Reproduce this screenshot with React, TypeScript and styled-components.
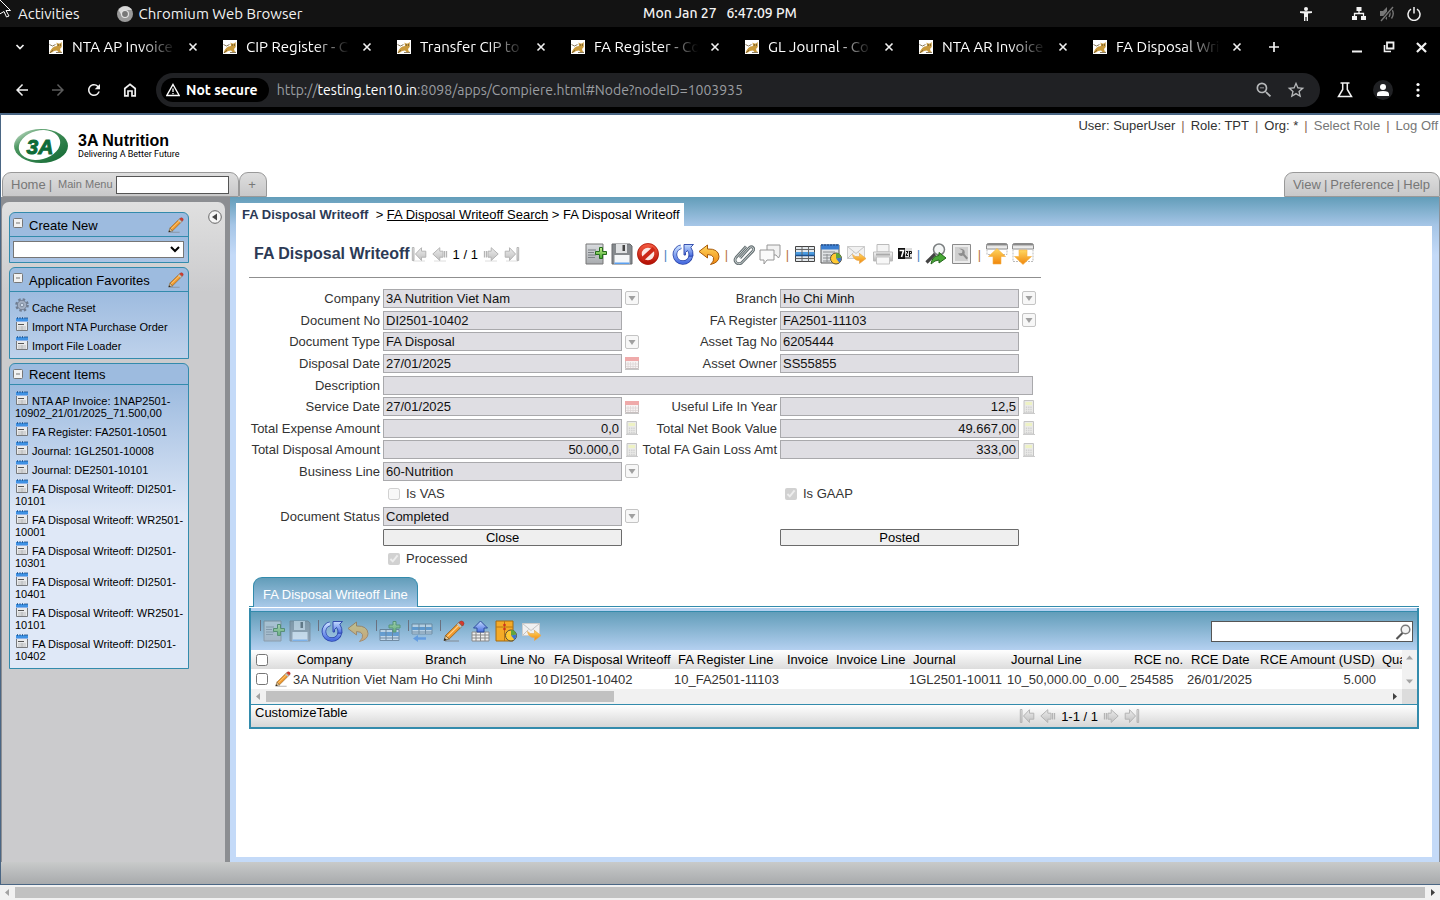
import React from 'react';
import styled, { createGlobalStyle, css } from 'styled-components';
import { MdArrowBack, MdArrowForward, MdRefresh, MdStarBorder, MdZoomOut } from 'react-icons/md';

const ui = '"Liberation Sans", Arial, sans-serif';
const desk = '"Ubuntu", "Noto Sans", sans-serif';
const teal = '#338bac';

const Global = createGlobalStyle`
  *, *::before, *::after { box-sizing: border-box; }
  body { margin: 0; font-family: ${ui}; font-size: 13px; line-height: 15px; color: #000; background: #fff; }
  button, input, select { font-family: inherit; font-size: inherit; margin: 0; }
  svg { display: block; flex: none; }
`;

/* ---------- Desktop and browser frame ---------- */

const Screen = styled.div`
  min-height: 100vh;
  display: flex;
  flex-direction: column;
`;
const TopBar = styled.div`
  height: 27px;
  background: #131313;
  color: #f2f2f2;
  font: 500 14px/27px ${desk};
  display: grid;
  grid-template-columns: 1fr auto 1fr;
  position: relative;
`;
const Pointer = styled.svg`
  position: absolute;
  left: 0;
  top: 0;
`;
const TopLeft = styled.div`
  display: flex;
  align-items: center;
  padding-left: 18px;
  gap: 37px;
  font-size: 15px;
  font-weight: 400;
`;
const AppName = styled.span`
  display: flex;
  align-items: center;
  gap: 6px;
`;
const Clock = styled.div`
  white-space: pre;
`;
const TopRight = styled.div`
  display: flex;
  align-items: center;
  justify-content: flex-end;
  gap: 12px;
  padding-right: 19px;
`;
const A11ySlot = styled.span`
  margin-right: 26px;
`;
const TabStrip = styled.div`
  height: 40px;
  background: #000;
  display: flex;
  align-items: center;
  padding: 0 12px;
`;
const PlainButton = styled.button`
  border: 0;
  padding: 0;
  background: none;
  color: inherit;
  display: flex;
  align-items: center;
  justify-content: center;
  flex: none;
`;
const TabMenu = styled(PlainButton)`
  width: 16px;
  height: 16px;
  margin-right: 21px;
`;
const BrowserTab = styled.div`
  width: 174px;
  min-width: 0;
  display: flex;
  align-items: center;
  color: #fff;
  font: 15px/20px ${desk};
`;
const TabTitle = styled.span`
  width: 104px;
  margin: 0 12px 0 9px;
  overflow: hidden;
  white-space: nowrap;
  mask-image: linear-gradient(90deg, #000 65%, transparent);
`;
const NewTab = styled(PlainButton)`
  width: 14px;
`;
const WindowButtons = styled.div`
  margin-left: auto;
  display: flex;
  align-items: center;
  gap: 20px;
`;
const NavBar = styled.div`
  height: 46px;
  background: #000;
  color: #f1f1f1;
  display: flex;
  align-items: center;
  padding: 0 16px 0 13px;
`;
const NavButtons = styled.div`
  display: flex;
  gap: 18px;
  margin-right: 17px;
`;
const NavButton = styled(PlainButton)<{ $off?: boolean }>`
  width: 18px;
  height: 18px;
  color: ${(p) => (p.$off ? '#5c5c5c' : '#f1f1f1')};
`;
const Address = styled.div`
  flex: 1;
  height: 34px;
  border-radius: 17px;
  background: #202124;
  display: flex;
  align-items: center;
  padding: 0 14px 0 5px;
  color: #9a9da1;
  font: 14px/20px ${desk};
`;
const Security = styled.span`
  height: 24px;
  border-radius: 12px;
  background: #000;
  color: #fff;
  font-weight: 700;
  display: flex;
  align-items: center;
  gap: 6px;
  padding: 0 11px 0 5px;
  margin-right: 8px;
`;
const Url = styled.span`
  flex: 1;
  & b { font-weight: 400; color: #fff; }
`;
const AddressIcons = styled.span`
  display: flex;
  gap: 12px;
  color: #b6b8ba;
`;
const NavRight = styled.div`
  display: flex;
  align-items: center;
  gap: 19px;
  margin-left: 16px;
`;
const Avatar = styled(PlainButton)`
  width: 20px;
  height: 20px;
  border-radius: 50%;
  background: #202124;
`;

/* ---------- Page frame ---------- */

const Page = styled.div`
  flex: 1;
  display: flex;
  flex-direction: column;
  border: solid #4a6684;
  border-width: 2px 0 1px 1px;
`;
const Header = styled.header`
  height: 82px;
  display: flex;
  justify-content: space-between;
  background: #fff;
`;
const HeaderSide = styled.div<{ $right?: boolean }>`
  display: flex;
  flex-direction: column;
  justify-content: space-between;
  align-items: ${(p) => (p.$right ? 'flex-end' : 'flex-start')};
`;
const Brand = styled.div`
  display: flex;
  align-items: center;
  gap: 9px;
  padding: 13px 0 0 12px;
`;
const BrandName = styled.div`
  font: bold 16px/17px ${ui};
`;
const Tagline = styled.div`
  font: 9px/11px Roboto, ${ui};
`;
const Session = styled.div`
  display: flex;
  gap: 6px;
  padding: 3px 2px 0 0;
  color: #333;
`;
const QuietLink = styled.a`
  color: #777;
  text-decoration: none;
`;
const Divider = styled.span`
  color: #8a6a52;
`;
const HeaderTabs = styled.nav`
  display: flex;
  padding-left: 1px;
`;
const HeaderTab = styled.div`
  height: 25px;
  display: flex;
  align-items: center;
  gap: 3px;
  padding: 0 9px 0 8px;
  color: #777;
  background: linear-gradient(#dedede, #c8c8c9);
  border: 1px solid #999;
  border-radius: 9px 9px 0 0;
`;
const PlusTab = styled(HeaderTab).attrs({ as: 'button' })`
  width: 28px;
  justify-content: center;
`;
const MenuLabel = styled.label`
  font-size: 11px;
  margin-left: 3px;
`;
const MenuInput = styled.input`
  width: 113px;
  height: 18px;
  border: 1px solid #555;
  background: #fff;
`;
const Body = styled.div`
  flex: 1;
  display: flex;
`;
const SideFrame = styled.aside`
  width: 229px;
  flex: none;
  display: flex;
  background: #8c8e92;
  padding: 5px 5px 0 1px;
`;
const Side = styled.div`
  flex: 1;
  border-radius: 7px 7px 0 0;
  background: linear-gradient(#e0e0e0, #cbcbcd 90px);
  display: flex;
  align-items: flex-start;
  justify-content: space-between;
  padding: 10px 3px 0 7px;
`;
const Boxes = styled.div`
  width: 180px;
  display: flex;
  flex-direction: column;
  gap: 4px;
`;
const Collapse = styled(PlainButton)`
  width: 14px;
  height: 14px;
  margin-top: -2px;
`;
const Box = styled.section`
  border: 1px solid ${teal};
  border-radius: 6px 6px 0 0;
  background: #9dbbdf;
`;
const BoxHead = styled.h2<{ $short?: boolean }>`
  margin: 0;
  height: ${(p) => (p.$short ? 21 : 24)}px;
  padding: 0 4px 0 3px;
  border-bottom: 1px solid ${teal};
  display: flex;
  align-items: center;
  font: 13px/15px ${ui};
  gap: 6px;
  & span { flex: 1; padding-top: ${(p) => (p.$short ? 0 : 2)}px; }
`;
const Toggle = styled(PlainButton)<{ $short?: boolean }>`
  width: 10px;
  height: 10px;
  margin-bottom: ${(p) => (p.$short ? 0 : 4)}px;
`;
const BoxBody = styled.div`
  background: linear-gradient(#9dbbdf, #dfe8f7 130px);
  padding: 3px 1px 6px 5px;
`;
const SelectBody = styled.div`
  padding: 4px 4px 4px 3px;
  background: linear-gradient(#9dbbdf, #abc4e4);
`;
const CreateSelect = styled.select`
  display: block;
  width: 100%;
  height: 17px;
  border: 1px solid #767676;
  background: #fff;
`;
const Items = styled.ul`
  list-style: none;
  margin: 0;
  padding: 0;
  font-size: 11px;
  line-height: 12px;
`;
const Item = styled.li`
  min-height: 19px;
  & svg { display: inline-block; vertical-align: baseline; margin-top: 3px; }
  & a { color: #000; text-decoration: none; }
`;
const Content = styled.main`
  flex: 1;
  min-width: 0;
  display: flex;
  flex-direction: column;
  align-items: stretch;
  padding: 6px 7px 5px 6px;
  background: linear-gradient(#629db9, #a5c5e6 28px, #c4daf8 58px);
  border-right: 1px solid #8c9097;
`;
const Crumbs = styled.nav`
  align-self: flex-start;
  height: 23px;
  padding: 4px 4px 0 6px;
  background: #fff;
  white-space: pre;
  & strong { color: #2c3a55; }
  & a { color: #000; }
`;
const Sheet = styled.div`
  flex: 1;
  background: #fff;
  padding: 16px 13px;
`;
const PageFoot = styled.footer`
  height: 22px;
  background: linear-gradient(#c8caca, #a8aaac);
`;
const ScrollTrack = styled.div`
  height: 15px;
  display: flex;
  align-items: center;
  background: #f1f1f1;
`;
const ScrollArrow = styled.span`
  width: 15px;
  height: 15px;
  flex: none;
  display: flex;
  align-items: center;
  justify-content: center;
`;
const ScrollRun = styled.span`
  flex: 1;
  height: 11px;
`;
const Thumb = styled.span<{ $part: number }>`
  display: block;
  width: ${(p) => p.$part}%;
  height: 11px;
  background: #c1c1c1;
`;

/* ---------- Record form ---------- */

const RecordBar = styled.div`
  max-width: 792px;
  height: 36px;
  margin-bottom: 9px;
  padding: 0 7px 11px 5px;
  border-bottom: 1px solid #8f8f8f;
  display: flex;
  align-items: center;
  justify-content: space-between;
`;
const RecordTitle = styled.h1`
  margin: 0;
  font: bold 16px/18px ${ui};
  color: #2c3a55;
`;
const TitleGroup = styled.div`
  display: flex;
  align-items: center;
  gap: 1px;
`;
const Pager = styled.div`
  display: flex;
  align-items: center;
  gap: 5px;
`;
const Tools = styled.div`
  display: flex;
  align-items: center;
  gap: 4px;
`;
const Sep = styled.span<{ $blue?: boolean }>`
  width: 5px;
  text-align: center;
  color: ${(p) => (p.$blue ? '#4a83c0' : '#b9743c')};
`;
const ToolButton = styled(PlainButton)<{ $faded?: boolean }>`
  opacity: ${(p) => (p.$faded ? 0.5 : 1)};
`;
const Form = styled.form`
  display: grid;
  justify-content: start;
  grid-template-columns: 131px 239px 14px 135px 239px 14px;
  column-gap: 3px;
  grid-template-rows: 22px 22px 21px 22px 22px 21px 22px 21px 22px 23px 22px 21px 21px;
  align-items: center;
  color: #333;
`;
const Label = styled.label<{ $col: number; $row: number }>`
  grid-column: ${(p) => p.$col};
  grid-row: ${(p) => p.$row};
  text-align: right;
  white-space: nowrap;
`;
const Field = styled.input<{ $col: number; $row: number; $wide?: boolean; $num?: boolean }>`
  grid-column: ${(p) => p.$col} / span ${(p) => (p.$wide ? 5 : 1)};
  grid-row: ${(p) => p.$row};
  height: 19px;
  min-width: 0;
  padding: 0 2px;
  border: 1px solid #a9a9ac;
  background: #dfdee3;
  color: #111;
  text-align: ${(p) => (p.$num ? 'right' : 'left')};
  ${(p) => p.$wide && css`margin-right: 3px;`}
`;
const FieldButton = styled(PlainButton)<{ $col: number; $row: number }>`
  grid-column: ${(p) => p.$col};
  grid-row: ${(p) => p.$row};
`;
const CheckLabel = styled.label<{ $col: number; $row: number }>`
  grid-column: ${(p) => p.$col};
  grid-row: ${(p) => p.$row};
  display: flex;
  align-items: center;
  gap: 6px;
  padding-left: 5px;
`;
const Check = styled.input.attrs({ type: 'checkbox' })`
  width: 12px;
  height: 12px;
`;
const ActionButton = styled.button<{ $col: number; $row: number }>`
  grid-column: ${(p) => p.$col};
  grid-row: ${(p) => p.$row};
  height: 17px;
  padding: 0;
  border: 1px solid #6b6b6b;
  border-radius: 1px;
  background: #efefef;
  color: #000;
  line-height: 15px;
`;

/* ---------- Lines panel ---------- */

const LinesTabRow = styled.div`
  margin-top: 8px;
  padding-left: 4px;
  display: flex;
  border-bottom: 1px solid ${teal};
`;
const LinesTab = styled.button`
  height: 30px;
  margin-bottom: -1px;
  padding: 3px 9px 0;
  border: solid ${teal};
  border-width: 1px 1px 0;
  border-radius: 9px 9px 0 0;
  background: linear-gradient(#629db9, #a9c9e9);
  color: #fff;
`;
const Panel = styled.section`
  margin-top: 1px;
  border: solid ${teal};
  border-width: 0 2px 2px;
`;
const PanelStrip = styled.div`
  height: 4px;
  background: #b4d0f0;
  border-bottom: 1px solid ${teal};
`;
const PanelTools = styled.div`
  height: 38px;
  padding: 8px 4px 0 9px;
  display: flex;
  gap: 7px;
  align-items: flex-start;
  background: linear-gradient(#629db9, #b4d0f0);
`;
const ToolGroup = styled.div`
  display: flex;
  align-items: flex-start;
  gap: 4px;
  & > :first-child { margin-right: -2px; }
`;
const Bar = styled.span`
  width: 1px;
  height: 11px;
  background: #6a7180;
`;
const Search = styled.label`
  margin: 1px 0 0 auto;
  width: 202px;
  height: 21px;
  border: 1px solid #555;
  background: #fff;
  display: flex;
  align-items: center;
  padding-right: 1px;
  & input { flex: 1; min-width: 0; border: 0; padding: 0 2px; outline: 0; }
`;
const TableArea = styled.div`
  display: flex;
`;
const TableClip = styled.div`
  flex: 1;
  min-width: 0;
  overflow: hidden;
`;
const Table = styled.table`
  width: 1247px;
  table-layout: fixed;
  border-collapse: collapse;
  color: #333;
  & th, & td { padding: 0; white-space: nowrap; text-align: left; font-weight: 400; }
  & thead tr { height: 19px; background: linear-gradient(#fff, #dcdcdc); color: #000; }
  & th { padding-left: 4px; }
  & tbody tr { height: 20px; }
`;
const NumCell = styled.td`
  &&& { text-align: right; padding-right: 2px; }
`;
const RowCheck = styled(Check)`
  display: block;
  margin-left: 5px;
`;
const HeadCheck = styled(Check)`
  display: block;
  margin-left: 1px;
`;
const RowEdit = styled(PlainButton)`
  margin-left: 3px;
`;
const VScroll = styled.div`
  width: 15px;
  background: #f1f1f1;
  display: flex;
  flex-direction: column;
  justify-content: space-between;
`;
const HScrollRow = styled.div`
  display: flex;
  border-bottom: 1px solid ${teal};
  & > :first-child { flex: 1; }
`;
const Corner = styled.div`
  width: 15px;
  background: #dcdcdc;
`;
const PanelFoot = styled.div`
  height: 22px;
  padding-left: 4px;
  display: flex;
  justify-content: space-between;
  background: linear-gradient(#fff, #d6d6d6);
`;
const FootPager = styled(Pager)`
  margin-right: 277px;
`;

/* ---------- Icons ---------- */

const Svg = ({ s = 22, w, h, vb, children }: any) => (
  <svg width={w || s} height={h || s} viewBox={vb || `0 0 ${w || s} ${h || s}`} aria-hidden="true">{children}</svg>
);

const HiddenSvg = styled.svg`
  position: absolute;
`;
const Defs = () => (
  <HiddenSvg width="0" height="0" aria-hidden="true">
    <defs>
      <linearGradient id="gPaper" x2="0" y2="1"><stop stopColor="#d9dcdf" /><stop offset="1" stopColor="#a8abae" /></linearGradient>
      <linearGradient id="gGreen" x2="0" y2="1"><stop stopColor="#c8f090" /><stop offset="1" stopColor="#3fa52c" /></linearGradient>
      <linearGradient id="gBlue" x2="0" y2="1"><stop stopColor="#c4dcff" /><stop offset="1" stopColor="#4a6ee0" /></linearGradient>
      <linearGradient id="gRed" x2="0" y2="1"><stop stopColor="#f0553c" /><stop offset="1" stopColor="#b81408" /></linearGradient>
      <linearGradient id="gOrange" x2="0" y2="1"><stop stopColor="#ffd860" /><stop offset="1" stopColor="#f0860c" /></linearGradient>
      <linearGradient id="gGrey" x2="0" y2="1"><stop stopColor="#fafafa" /><stop offset="1" stopColor="#b4b4b4" /></linearGradient>
      <linearGradient id="gSilver" x2="0" y2="1"><stop stopColor="#ececec" /><stop offset="1" stopColor="#c0c0c0" /></linearGradient>
      <linearGradient id="gDark" x2="0" y2="1"><stop stopColor="#555" /><stop offset=".5" stopColor="#e4e4e4" /><stop offset="1" stopColor="#f6f6f6" /></linearGradient>
      <linearGradient id="gLogo" x2="1" y2="1"><stop stopColor="#eef6ee" /><stop offset=".3" stopColor="#4c9660" /><stop offset="1" stopColor="#0e6630" /></linearGradient>
    </defs>
  </HiddenSvg>
);

const Plus = 'M14.500 4.500h3v4h4v3h-4v4h-3v-4h-4v-3h4z';
const NewIcon = () => (
  <Svg><path d="M1 1h17v20H1z" fill="url(#gPaper)" stroke="#777" /><path d="M3 7h8M3 9.500h6M3 12h8M3 14.500h7" stroke="#7b7f84" /><path d={Plus} fill="url(#gGreen)" stroke="#256b1d" /></Svg>
);
const SaveIcon = () => (
  <Svg><path d="M1 1h18l2 2v18H1z" fill="#85898d" stroke="#686b6e" /><path d="M5 1h11v9H5z" fill="#dfe1e3" /><path d="M11.500 2h2.500v6h-2.500z" fill="#444" /><path d="M3.500 12h15v9h-15z" fill="#f4f6f8" /><path d="M3.500 19.500h15V21h-15z" fill="#5aa0f0" /></Svg>
);
const CancelIcon = () => (
  <Svg><circle cx="11" cy="11" r="8.500" fill="#fbe8e4" stroke="url(#gRed)" strokeWidth="4.500" /><path d="M5 16.500L17 5.500" stroke="#cc2818" strokeWidth="4" /><circle cx="11" cy="11" r="10.500" fill="none" stroke="#a51408" strokeWidth=".7" /></Svg>
);
const RefreshIcon = () => (
  <Svg><path d="M9 3.800a8 8 0 1 0 9.800 9.200" fill="none" stroke="#2842a8" strokeWidth="4.600" /><path d="M9 3.800a8 8 0 1 0 9.800 9.200" fill="none" stroke="url(#gBlue)" strokeWidth="3" /><path d="M12 1.500h9.500l-2.700 2.700q2.700 3.800 2.200 9h-4q.3-3.800-1.500-5.700l-2 2V12H12z" fill="url(#gBlue)" stroke="#2842a8" strokeWidth=".9" /></Svg>
);
const UndoIcon = () => (
  <Svg><path d="M1 8.500L9.500 2v4q11-.5 11.500 7.500 0 6-8.500 8 4-3.500 3-7-1-3-6-3V15z" fill="url(#gOrange)" stroke="#a85a08" /></Svg>
);
const ClipIcon = () => (
  <Svg><path d="M7 15L16.500 4.500q2-1.500 3.500 0t0 3.500L8.500 20q-3 1.800-5.500-.5-2-2.500 0-5L13 3.500" fill="none" stroke="#667073" strokeWidth="2.800" /><path d="M7 15L16.500 4.500q2-1.500 3.500 0t0 3.500L8.500 20q-3 1.800-5.500-.5-2-2.500 0-5L13 3.500" fill="none" stroke="#c8d0d0" strokeWidth="1" /></Svg>
);
const ChatIcon = () => (
  <Svg><path d="M8 2h13v10l-1.500 3-2.500-3H8z" fill="#f2f2f2" stroke="#969696" /><path d="M1 7h14v10H8l-3 4v-4H1z" fill="#fafafa" stroke="#969696" /></Svg>
);
const GridIcon = () => (
  <Svg><path d="M1.500 3.500h19v15h-19z" fill="#e3e8ec" stroke="#444" /><path d="M1.500 9h19v4h-19z" fill="#4a9be0" /><path d="M1.500 6.500h19M1.500 15.500h19M8 3.500v15M14.500 3.500v15" stroke="#666" /><path d="M1.500 12.500h19" stroke="#1c4f8c" strokeWidth="1.500" /></Svg>
);
const Pie = () => (
  <g><circle cx="16" cy="15.500" r="5.500" fill="#ffc934" stroke="#58503c" /><path d="M16 15.500V10a5.500 5.500 0 0 1 5.300 4.500z" fill="#5fa53e" /><path d="M16 15.500l5.300-1a5.500 5.500 0 0 1-1.800 5.300z" fill="#3a76d0" /></g>
);
const ReportIcon = () => (
  <Svg><path d="M1 2h18v18H1z" fill="#e1e3e5" stroke="#555" /><path d="M1 1.500h18v5H1z" fill="#3b7ed0" /><path d="M2 1v2M5 1v2M8 1v2M11 1v2M14 1v2M17 1v2" stroke="#1d3f78" /><path d="M3 9h12M3 12h8M3 15h7M3 18h7M7 11v8" stroke="#8a8d90" /><Pie /></Svg>
);
const MailIcon = () => (
  <Svg><path d="M1.500 3.500h17v12h-17z" fill="#f1f1f1" stroke="#ccc" /><path d="M1.500 3.500l8.500 7 8.500-7M1.500 15.500l6-6M18.500 15.500l-6-6" fill="none" stroke="#c4c4c4" /><path d="M6.500 11.500q2 3 7 2v-3l6.500 5-6.500 5v-3q-6 0-7-6z" fill="url(#gOrange)" stroke="#e8a850" strokeWidth=".7" /></Svg>
);
const PrintIcon = () => (
  <Svg><path d="M5 1.500h12V9H5z" fill="#f4f4f4" stroke="#bbb" /><path d="M1.500 9h19v9h-19z" fill="url(#gGrey)" stroke="#bbb" /><path d="M4.500 14h13v7h-13z" fill="#f7f7f7" stroke="#c4c4c4" /><path d="M4 10.500h14v2H4z" fill="#aaa" /></Svg>
);
const ZipIcon = () => (
  <Svg w={14} h={22}><path d="M0 5h14v11H0z" fill="#ddd" /><path d="M0 5h7v11H0z" fill="#111" /><path d="M1.500 7.500h4L3.500 14" fill="none" stroke="#fff" strokeWidth="1.600" /><path d="M8 8.500h2l-2 4h2M11.500 8v6M12 8.500h1.500v2H12" fill="none" stroke="#111" /><path d="M7 15h7" stroke="#111" /></Svg>
);
const FindIcon = () => (
  <Svg><circle cx="14" cy="6.500" r="5.500" fill="#f3f5f5" stroke="#7b7f80" strokeWidth="1.500" /><path d="M10 11L1.500 19.500" stroke="#444" strokeWidth="3.200" /><path d="M6 21q1-8 8-8.500V9.500l7 5.500-7 5v-3q-4 0-8 4z" fill="#48a836" stroke="#23661a" /></Svg>
);
const WrenchIcon = () => (
  <Svg><path d="M1.500 1.500h18v19h-18z" fill="#ececec" stroke="#8a8a8a" /><path d="M4 4h13v14H4z" fill="#cfcfcf" /><path d="M8 5.500l3.500 2-.5 2.500-4 .5q2 3.500 5 2l3.500 4 1.500-1.500-3.500-4Q15 5.500 8 5.500z" fill="#8d8d8d" /></Svg>
);
const UpIcon = () => (
  <Svg><path d="M0.500 2.500q0-2 2-2h17q2 0 2 2V6H.5z" fill="url(#gDark)" stroke="#8b8b8b" /><path d="M1 6.500v5h20v-5" fill="none" stroke="#bbb" strokeDasharray="2 1" /><path d="M11 5.500l8.500 8h-4.500V21H7v-7.500H2.500z" fill="url(#gOrange)" stroke="#f6b040" strokeWidth=".6" /></Svg>
);
const DownIcon = () => (
  <Svg><path d="M0.500 2.500q0-2 2-2h17q2 0 2 2V6H.5z" fill="url(#gDark)" stroke="#8b8b8b" /><path d="M1 6.500v12h20v-12" fill="none" stroke="#bbb" strokeDasharray="2 1" /><path d="M11 21.500l8.500-8h-4.500V7H7v6.500H2.500z" fill="url(#gOrange)" stroke="#f6b040" strokeWidth=".6" /></Svg>
);
const RowAddIcon = () => (
  <Svg><path d="M1 9.500h19v11H1z" fill="#e8eef6" stroke="#456" /><path d="M1 12h19v4H1z" fill="#3b80c8" /><path d="M7 9.500v11M13.500 9.500v11M1 18h19" stroke="#456" /><path d="M14 1.500h3V5h4v3h-4v4h-3V8h-4V5h4z" fill="url(#gGreen)" stroke="#2f7d25" /></Svg>
);
const RowMoveIcon = () => (
  <Svg><path d="M1 4h20v10H1z" fill="#e8eef6" stroke="#567" /><path d="M1 7h20v3H1z" fill="#3b80c8" /><path d="M8 4v10M14.500 4v10M1 12h20" stroke="#567" /><path d="M15 18.500H6" stroke="#2f7ae0" strokeWidth="2.500" /><path d="M7 15v7l-5-3.500z" fill="#2f7ae0" /></Svg>
);
const PencilIcon = ({ s = 22 }: { s?: number }) => (
  <Svg s={s} vb="0 0 22 22"><path d="M2 21h14" stroke="#777" strokeWidth="1.500" opacity=".5" /><path d="M2.500 15.500L15.500 2.800l3.600 3.400L6.200 19z" fill="#f0982c" stroke="#8a5a1c" strokeWidth=".8" /><path d="M4.300 16.600L16.600 4.500" stroke="#ffd48a" strokeWidth="1.200" /><path d="M14.600 3.700l3.600 3.400" stroke="#b4c4d4" strokeWidth="2" /><path d="M16 2.300q2.300-2.300 4.300-.6 1.700 2-.6 4.300z" fill="#d8392c" stroke="#9c3428" strokeWidth=".6" /><path d="M1 20.500l1.500-5L6.200 19z" fill="#e8c898" stroke="#6d5020" strokeWidth=".7" /><path d="M.8 20.800l.8-2.700 2 1.800z" fill="#222" /></Svg>
);
const ExportIcon = () => (
  <Svg><path d="M3 12h17v9H3z" fill="#f0f0f0" stroke="#888" /><path d="M3 15h17M3 18h17M7 12v9M11.500 12v9M16 12v9" stroke="#888" /><path d="M11.500 1l7 7h-3.500v4h-7V8H4.500z" fill="url(#gBlue)" stroke="#2c4c9c" /></Svg>
);
const ArchiveIcon = () => (
  <Svg><path d="M1 1h17v20H1z" fill="#f5ab27" stroke="#a46a10" /><path d="M1 7h17M9.500 1v20" stroke="#b87512" /><circle cx="9.500" cy="5" r="1.300" fill="#d03020" /><circle cx="9.500" cy="9" r="1.300" fill="#d03020" /><Pie /></Svg>
);
const ArrowIcon = ({ kind }: { kind: 'first' | 'prev' | 'next' | 'last' }) => {
  const flip = kind === 'next' || kind === 'last';
  const end = kind === 'first' || kind === 'last';
  return (
    <Svg s={16}>
      <path d="M2 15h12" stroke="#dedede" />
      <g transform={flip ? 'matrix(-1 0 0 1 16 0)' : undefined} fill="url(#gSilver)" stroke="#b4b4b4">
        {end ? <><path d="M1.300 1.500h1.700v13H1.300z" /><path d="M4.500 8l6-6.300v3.500h4.300v6h-4.300v3.300z" /></> : <><path d="M.8 8l7-6.300v3.500h3.200v6H7.800v3.300z" /><path d="M12.500 5v6.500M14.500 5v6.500" fill="none" strokeWidth="1.300" /></>}
      </g>
    </Svg>
  );
};
const DocIcon = () => (
  <Svg w={14} h={14}><path d="M1.500 2h11v11.500h-11z" fill="#e9eaec" stroke="#77797c" /><path d="M1 1h12v4H1z" fill="#3f92e4" /><path d="M1 4h12v1H1z" fill="#8fb4ea" /><path d="M2.500 0v2M5 0v2M7.500 0v2M10 0v2M12 0v2" stroke="#1f4f86" strokeWidth=".8" /><path d="M3 7.500h6" stroke="#555" /><path d="M3 10h8M3 12h8M7 9v4" stroke="#b0b2b4" strokeWidth=".8" /></Svg>
);
const GearIcon = () => (
  <Svg w={14} h={14}><circle cx="7" cy="7" r="5.600" fill="none" stroke="#6f7c90" strokeWidth="2.400" strokeDasharray="2.400 2" /><circle cx="7" cy="7" r="4.700" fill="#a3afc2" stroke="#6f7c90" strokeWidth=".9" /><circle cx="7" cy="7" r="1.800" fill="#cfdcec" stroke="#6f7c90" strokeWidth=".8" /></Svg>
);
const DropIcon = () => (
  <Svg s={14}><rect x=".5" y=".5" width="13" height="13" rx="1.500" fill="#f7f7f7" stroke="#c4c4c4" /><path d="M3.500 5h7L7 10z" fill="#a0a0a0" /></Svg>
);
const DateIcon = () => (
  <Svg s={14}><path d="M.5 1.500h13v11H.5z" fill="#f7f3f3" stroke="#c8c0c0" /><path d="M0 1h14v4H0z" fill="#efaaaa" /><path d="M3 6v6M5.500 6v6M8 6v6M10.500 6v6M1 8h12M1 10.500h12" stroke="#ddd6d6" strokeWidth=".8" /><path d="M0 13.500h14" stroke="#c6c6c6" /></Svg>
);
const CalcIcon = () => (
  <Svg s={14}><path d="M2 .5h9.500v12.500H2z" fill="#eaeae8" stroke="#c4c4c4" /><path d="M3.500 2h6.500v3H3.500z" fill="#eef2c4" /><path d="M4.500 6.500v6M6.800 6.500v6M9 6.500v6" stroke="#d0d0d0" strokeWidth="1.300" strokeDasharray="1.500 .8" /><path d="M1 13.500h12" stroke="#ccc" /></Svg>
);
const CatIcon = () => (
  <Svg s={14}><path d="M0 0h14v14H0z" fill="#fff" /><path d="M.5 13q1.500-5 5-6.500L8 6 7.500 2.500l1.500 1h2l1.700-1.500v5L11 9l.8 2.500 1.500.5H9.500L8 10.500 5 11l-2 1.500z" fill="#c99a3c" /><path d="M.5 4.500l3 1.500 3-1.500M1 13l3-3M7 12.500h6" stroke="#6c5a38" fill="none" strokeWidth=".8" /><path d="M8.800 5h.9M11 5h.9" stroke="#222" /></Svg>
);
const MinusBox = () => (
  <Svg s={10}><rect x=".5" y=".5" width="9" height="9" rx="1" fill="#f2f2f2" stroke="#777" /><path d="M3 5h4" stroke="#777" /></Svg>
);
const Cross = ({ s = 10, t = 1.6 }) => (
  <Svg s={s} vb="0 0 10 10"><path d="M1.500 1.500l7 7M8.500 1.500l-7 7" stroke="#f1f1f1" strokeWidth={t} /></Svg>
);
const Tri = ({ d, dark }: { d: string; dark?: boolean }) => (
  <Svg s={9}><path d={d} fill={dark ? '#404040' : '#a3a3a3'} /></Svg>
);
const LEFT = 'M6 1v7L2 4.500z';
const RIGHT = 'M3 1v7l4-3.500z';
const UP = 'M1 6.500h7l-3.500-4z';
const DOWN = 'M1 2.500h7l-3.500 4z';
const Logo = () => (
  <Svg w={56} h={36}>
    <ellipse cx="28" cy="18" rx="27" ry="17" fill="url(#gLogo)" />
    <ellipse cx="26.500" cy="17" rx="21" ry="14.500" fill="#fff" transform="rotate(-14 26.500 17)" />
    <text x="27" y="26" textAnchor="middle" fontFamily="Liberation Sans, sans-serif" fontWeight="bold" fontStyle="italic" fontSize="21" fill="#0e6b38" stroke="#0e6b38" strokeWidth="1">3A</text>
  </Svg>
);

/* ---------- Data ---------- */

const browserTabs = ['NTA AP Invoice', 'CIP Register - C', 'Transfer CIP to', 'FA Register - Co', 'GL Journal - Co', 'NTA AR Invoice', 'FA Disposal Wri'];

const recent = [
  'NTA AP Invoice: 1NAP2501-10902_21/01/2025_71.500,00',
  'FA Register: FA2501-10501',
  'Journal: 1GL2501-10008',
  'Journal: DE2501-10101',
  'FA Disposal Writeoff: DI2501-10101',
  'FA Disposal Writeoff: WR2501-10001',
  'FA Disposal Writeoff: DI2501-10301',
  'FA Disposal Writeoff: DI2501-10401',
  'FA Disposal Writeoff: WR2501-10101',
  'FA Disposal Writeoff: DI2501-10402',
];

type Kind = 'drop' | 'date' | 'calc';
type FieldDef = { label: string; value: string; row: number; side: 0 | 1; icon?: Kind; num?: boolean; wide?: boolean };
const fields: FieldDef[] = [
  { label: 'Company', value: '3A Nutrition Viet Nam', row: 1, side: 0, icon: 'drop' },
  { label: 'Branch', value: 'Ho Chi Minh', row: 1, side: 1, icon: 'drop' },
  { label: 'Document No', value: 'DI2501-10402', row: 2, side: 0 },
  { label: 'FA Register', value: 'FA2501-11103', row: 2, side: 1, icon: 'drop' },
  { label: 'Document Type', value: 'FA Disposal', row: 3, side: 0, icon: 'drop' },
  { label: 'Asset Tag No', value: '6205444', row: 3, side: 1 },
  { label: 'Disposal Date', value: '27/01/2025', row: 4, side: 0, icon: 'date' },
  { label: 'Asset Owner', value: 'SS55855', row: 4, side: 1 },
  { label: 'Description', value: '', row: 5, side: 0, wide: true },
  { label: 'Service Date', value: '27/01/2025', row: 6, side: 0, icon: 'date' },
  { label: 'Useful Life In Year', value: '12,5', row: 6, side: 1, icon: 'calc', num: true },
  { label: 'Total Expense Amount', value: '0,0', row: 7, side: 0, icon: 'calc', num: true },
  { label: 'Total Net Book Value', value: '49.667,00', row: 7, side: 1, icon: 'calc', num: true },
  { label: 'Total Disposal Amount', value: '50.000,0', row: 8, side: 0, icon: 'calc', num: true },
  { label: 'Total FA Gain Loss Amt', value: '333,00', row: 8, side: 1, icon: 'calc', num: true },
  { label: 'Business Line', value: '60-Nutrition', row: 9, side: 0, icon: 'drop' },
  { label: 'Document Status', value: 'Completed', row: 11, side: 0, icon: 'drop' },
];
const fieldIcons = { drop: DropIcon, date: DateIcon, calc: CalcIcon };

type Tool = [string, React.ComponentType<any>, boolean?];
const tools: (Tool | 'blue' | 'amber')[] = [
  ['New', NewIcon], ['Save', SaveIcon], ['Delete', CancelIcon], 'blue',
  ['Refresh', RefreshIcon], ['Undo', UndoIcon], 'amber',
  ['Attachment', ClipIcon], ['Chat', ChatIcon], 'amber',
  ['Grid', GridIcon], ['Report', ReportIcon], ['Mail', MailIcon], ['Print', PrintIcon], ['Archive', ZipIcon], 'blue',
  ['Find', FindIcon], ['Settings', WrenchIcon], 'amber',
  ['Parent', UpIcon], ['Detail', DownIcon],
];
const lineTools: Tool[][] = [
  [['New line', NewIcon, true], ['Save line', SaveIcon, true]],
  [['Refresh lines', RefreshIcon], ['Undo line', UndoIcon, true]],
  [['Add row', RowAddIcon, true]],
  [['Move row', RowMoveIcon, true]],
  [['Edit', PencilIcon], ['Export', ExportIcon], ['Line report', ArchiveIcon], ['Send', MailIcon]],
];

const columns: [string, number][] = [
  ['Company', 128], ['Branch', 75], ['Line No', 54], ['FA Disposal Writeoff', 124], ['FA Register Line', 109], ['Invoice', 49],
  ['Invoice Line', 77], ['Journal', 98], ['Journal Line', 123], ['RCE no.', 57], ['RCE Date', 69], ['RCE Amount (USD)', 122], ['Quantity', 120],
];
const line = ['3A Nutrition Viet Nam', 'Ho Chi Minh', '10', 'DI2501-10402', '10_FA2501-11103', '', '', '1GL2501-10011', '10_50,000.00_0.00_', '254585', '26/01/2025', '5.000', ''];
const numeric = ['Line No', 'RCE Amount (USD)'];

const RecordPager = ({ text, as: As = Pager }: { text: string; as?: any }) => (
  <As>
    <PlainButton aria-label="First"><ArrowIcon kind="first" /></PlainButton>
    <PlainButton aria-label="Previous"><ArrowIcon kind="prev" /></PlainButton>
    <span>{text}</span>
    <PlainButton aria-label="Next"><ArrowIcon kind="next" /></PlainButton>
    <PlainButton aria-label="Last"><ArrowIcon kind="last" /></PlainButton>
  </As>
);

const HScroll = ({ part }: { part: number }) => (
  <ScrollTrack>
    <ScrollArrow><Tri d={LEFT} /></ScrollArrow>
    <ScrollRun><Thumb $part={part} /></ScrollRun>
    <ScrollArrow><Tri d={RIGHT} dark /></ScrollArrow>
  </ScrollTrack>
);

const BrowserFrame = () => (
  <>
    <TopBar>
      <TopLeft>
        <span>Activities</span>
        <AppName>
          <Svg s={16}><circle cx="8" cy="8" r="8" fill="#9a9a9a" /><path d="M8 4h7A8 8 0 0 0 1.500 4L5 10z" fill="#d8d8d8" /><circle cx="8" cy="8" r="4" fill="#e4e4e4" /><circle cx="8" cy="8" r="2.900" fill="#777" /></Svg>
          Chromium Web Browser
        </AppName>
      </TopLeft>
      <Clock>{'Mon Jan 27   6:47:09 PM'}</Clock>
      <TopRight>
        <A11ySlot>
          <Svg s={14}><circle cx="7" cy="2" r="2" fill="#f2f2f2" /><path d="M1 4.300h12v1.600L9 6.500V14H7.600v-4H6.400v4H5V6.500L1 5.900z" fill="#f2f2f2" /></Svg>
        </A11ySlot>
        <Svg s={16}><path d="M5.500 1h5v4h-5zM1 10h5v4H1zM10 10h5v4h-5z" fill="#f2f2f2" /><path d="M8 5v2.500M3.500 10V7.500h9V10" fill="none" stroke="#f2f2f2" strokeWidth="1.300" /></Svg>
        <Svg s={16}><path d="M1 5h3l4-4v13l-4-4H1z" fill="#777" /><path d="M10 5q2 2.500 0 6M12.500 3q3.500 4.500 0 9.500" fill="none" stroke="#777" strokeWidth="1.400" /><path d="M2 15L14 1" stroke="#131313" strokeWidth="3" /><path d="M2 15L14 1" stroke="#777" strokeWidth="1.400" /></Svg>
        <Svg s={14}><path d="M4 2.200a6 6 0 1 0 6 0M7 0v6.500" fill="none" stroke="#f2f2f2" strokeWidth="1.500" /></Svg>
      </TopRight>
      <Pointer width="12" height="18" viewBox="0 0 12 18" aria-hidden="true"><path d="M-2 -2L10.500 10.500H6l3 5.500-2.500 1L4 11.500 -2 15z" fill="#111" stroke="#fff" /></Pointer>
    </TopBar>
    <TabStrip>
      <TabMenu aria-label="Search tabs"><Svg s={10}><path d="M1.500 3L5 6.500 8.500 3" fill="none" stroke="#f1f1f1" strokeWidth="1.700" /></Svg></TabMenu>
      {browserTabs.map((t) => (
        <BrowserTab key={t}>
          <CatIcon />
          <TabTitle>{t}</TabTitle>
          <PlainButton aria-label={`Close ${t}`}><Cross /></PlainButton>
        </BrowserTab>
      ))}
      <NewTab aria-label="New tab"><Svg s={12}><path d="M6 1v10M1 6h10" stroke="#f1f1f1" strokeWidth="1.700" /></Svg></NewTab>
      <WindowButtons>
        <PlainButton aria-label="Minimize"><Svg s={12}><path d="M1 10.500h10" stroke="#f1f1f1" strokeWidth="2" /></Svg></PlainButton>
        <PlainButton aria-label="Restore"><Svg s={12}><path d="M4 1.500h6.500v6H4z" fill="none" stroke="#f1f1f1" strokeWidth="1.800" /><path d="M1.500 4v6.500H8" fill="none" stroke="#f1f1f1" strokeWidth="1.600" /></Svg></PlainButton>
        <PlainButton aria-label="Close"><Cross s={13} t={1.7} /></PlainButton>
      </WindowButtons>
    </TabStrip>
    <NavBar>
      <NavButtons>
        <NavButton aria-label="Back"><MdArrowBack size={18} /></NavButton>
        <NavButton aria-label="Forward" $off><MdArrowForward size={18} /></NavButton>
        <NavButton aria-label="Reload"><MdRefresh size={18} /></NavButton>
        <NavButton aria-label="Home"><Svg s={16}><path d="M2.800 6.500L8 2.300l5.200 4.200v7.300H10V9H6v4.800H2.800z" fill="none" stroke="#f1f1f1" strokeWidth="1.700" /></Svg></NavButton>
      </NavButtons>
      <Address>
        <Security>
          <Svg s={14}><path d="M7 1.500L13.200 12.500H.8z" fill="none" stroke="#fff" strokeWidth="1.400" /><path d="M7 5.500v3.500M7 10v1.300" stroke="#fff" strokeWidth="1.300" /></Svg>
          Not secure
        </Security>
        <Url>http://<b>testing.ten10.in</b>:8098/apps/Compiere.html#Node?nodeID=1003935</Url>
        <AddressIcons><MdZoomOut size={20} /><MdStarBorder size={20} /></AddressIcons>
      </Address>
      <NavRight>
        <PlainButton aria-label="Labs"><Svg s={18}><path d="M4.500 2h9M6.700 2v6.500L2.500 15.500h13l-4.200-7V2" fill="none" stroke="#f1f1f1" strokeWidth="1.500" /></Svg></PlainButton>
        <Avatar aria-label="Profile"><Svg s={14}><circle cx="7" cy="4" r="3" fill="#fff" /><path d="M1 13V11q0-3 6-3t6 3v2z" fill="#fff" /></Svg></Avatar>
        <PlainButton aria-label="Menu"><Svg w={12} h={16}><circle cx="6" cy="2.500" r="1.600" fill="#fff" /><circle cx="6" cy="8" r="1.600" fill="#fff" /><circle cx="6" cy="13.500" r="1.600" fill="#fff" /></Svg></PlainButton>
      </NavRight>
    </NavBar>
  </>
);

const Sidebar = () => (
  <SideFrame>
    <Side>
      <Boxes>
        <Box>
          <BoxHead><Toggle aria-label="Collapse Create New"><MinusBox /></Toggle><span>Create New</span><PencilIcon s={16} /></BoxHead>
          <SelectBody><CreateSelect aria-label="Create New"><option /></CreateSelect></SelectBody>
        </Box>
        <Box>
          <BoxHead><Toggle aria-label="Collapse Application Favorites"><MinusBox /></Toggle><span>Application Favorites</span><PencilIcon s={16} /></BoxHead>
          <BoxBody>
            <Items>
              <Item><GearIcon /> <a href="#cache">Cache Reset</a></Item>
              <Item><DocIcon /> <a href="#po">Import NTA Purchase Order</a></Item>
              <Item><DocIcon /> <a href="#loader">Import File Loader</a></Item>
            </Items>
          </BoxBody>
        </Box>
        <Box>
          <BoxHead $short><Toggle $short aria-label="Collapse Recent Items"><MinusBox /></Toggle><span>Recent Items</span></BoxHead>
          <BoxBody>
            <Items>{recent.map((r) => <Item key={r}><DocIcon /> <a href="#recent">{r}</a></Item>)}</Items>
          </BoxBody>
        </Box>
      </Boxes>
      <Collapse aria-label="Collapse sidebar"><Svg s={14}><circle cx="7" cy="7" r="6.300" fill="#f5f5f5" stroke="#666" /><path d="M9 3.500v7L4 7z" fill="#444" /></Svg></Collapse>
    </Side>
  </SideFrame>
);

const RecordForm = () => (
  <Form>
    {fields.map((f) => {
      const col = f.side * 3 + 1;
      const id = f.label.replace(/ /g, '-').toLowerCase();
      const Icon = f.icon && fieldIcons[f.icon];
      return (
        <React.Fragment key={id}>
          <Label htmlFor={id} $col={col} $row={f.row}>{f.label}</Label>
          <Field id={id} value={f.value} readOnly $col={col + 1} $row={f.row} $num={f.num} $wide={f.wide} />
          {Icon && <FieldButton type="button" aria-label={`Pick ${f.label}`} $col={col + 2} $row={f.row}><Icon /></FieldButton>}
        </React.Fragment>
      );
    })}
    <CheckLabel $col={2} $row={10}><Check disabled />Is VAS</CheckLabel>
    <CheckLabel $col={5} $row={10}><Check disabled checked readOnly />Is GAAP</CheckLabel>
    <ActionButton type="button" $col={2} $row={12}>Close</ActionButton>
    <ActionButton type="button" $col={5} $row={12}>Posted</ActionButton>
    <CheckLabel $col={2} $row={13}><Check disabled checked readOnly />Processed</CheckLabel>
  </Form>
);

const LinesPanel = () => (
  <>
    <LinesTabRow><LinesTab>FA Disposal Writeoff Line</LinesTab></LinesTabRow>
    <Panel>
      <PanelStrip />
      <PanelTools>
        {lineTools.map((g, i) => (
          <ToolGroup key={i}>
            <Bar />
            {g.map(([name, Icon, faded]) => <ToolButton key={name} aria-label={name} $faded={faded}><Icon /></ToolButton>)}
          </ToolGroup>
        ))}
        <Search>
          <input aria-label="Search lines" />
          <Svg s={16}><circle cx="10.500" cy="5.500" r="4.300" fill="#f4f4f4" stroke="#7a7a7a" strokeWidth="1.500" /><path d="M7.500 9L1.500 15" stroke="#555" strokeWidth="2.200" /></Svg>
        </Search>
      </PanelTools>
      <TableArea>
        <TableClip>
          <Table>
            <colgroup><col width="21" /><col width="21" />{columns.map(([c, w]) => <col key={c} width={w} />)}</colgroup>
            <thead>
              <tr><th><HeadCheck aria-label="Select all" /></th><th />{columns.map(([c]) => <th key={c}>{c}</th>)}</tr>
            </thead>
            <tbody>
              <tr>
                <td><RowCheck aria-label="Select line 10" /></td>
                <td><RowEdit aria-label="Edit line 10"><PencilIcon s={16} /></RowEdit></td>
                {line.map((v, i) => (numeric.includes(columns[i][0]) ? <NumCell key={i}>{v}</NumCell> : <td key={i}>{v}</td>))}
              </tr>
            </tbody>
          </Table>
        </TableClip>
        <VScroll><ScrollArrow><Tri d={UP} /></ScrollArrow><ScrollArrow><Tri d={DOWN} /></ScrollArrow></VScroll>
      </TableArea>
      <HScrollRow><HScroll part={31} /><Corner /></HScrollRow>
      <PanelFoot>CustomizeTable<RecordPager as={FootPager} text="1-1 / 1" /></PanelFoot>
    </Panel>
  </>
);

export default function App() {
  return (
    <Screen>
      <Global />
      <Defs />
      <BrowserFrame />
      <Page>
        <Header>
          <HeaderSide>
            <Brand><Logo /><div><BrandName>3A Nutrition</BrandName><Tagline>Delivering A Better Future</Tagline></div></Brand>
            <HeaderTabs>
              <HeaderTab>
                <QuietLink href="#home">Home</QuietLink>|
                <MenuLabel htmlFor="main-menu">Main Menu</MenuLabel>
                <MenuInput id="main-menu" />
              </HeaderTab>
              <PlusTab aria-label="Add tab">+</PlusTab>
            </HeaderTabs>
          </HeaderSide>
          <HeaderSide $right>
            <Session>
              <span>User: SuperUser</span><Divider>|</Divider>
              <span>Role: TPT</span><Divider>|</Divider>
              <span>Org: *</span><Divider>|</Divider>
              <QuietLink href="#role">Select Role</QuietLink><Divider>|</Divider>
              <QuietLink href="#logoff">Log Off</QuietLink>
            </Session>
            <HeaderTab>
              <QuietLink href="#view">View</QuietLink>|
              <QuietLink href="#preference">Preference</QuietLink>|
              <QuietLink href="#help">Help</QuietLink>
            </HeaderTab>
          </HeaderSide>
        </Header>
        <Body>
          <Sidebar />
          <Content>
            <Crumbs><strong>FA Disposal Writeoff</strong>{'  > '}<a href="#search">FA Disposal Writeoff Search</a>{' > FA Disposal Writeoff'}</Crumbs>
            <Sheet>
              <RecordBar>
                <TitleGroup><RecordTitle>FA Disposal Writeoff</RecordTitle><RecordPager text="1 / 1" /></TitleGroup>
                <Tools>
                  {tools.map((t, i) => {
                    if (typeof t === 'string') return <Sep key={i} $blue={t === 'blue'}>|</Sep>;
                    const [name, Icon] = t;
                    return <ToolButton key={name} aria-label={name}><Icon /></ToolButton>;
                  })}
                </Tools>
              </RecordBar>
              <RecordForm />
              <LinesPanel />
            </Sheet>
          </Content>
        </Body>
        <PageFoot />
      </Page>
      <HScroll part={100} />
    </Screen>
  );
}
